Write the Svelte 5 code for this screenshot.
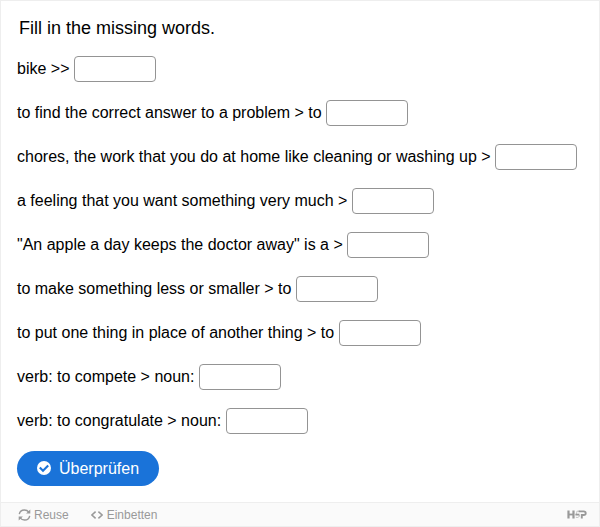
<script lang="ts">
    interface Blank {
        clue: string;
        answer: string;
    }

    let blanks: Blank[] = $state([
        { clue: 'bike >>', answer: '' },
        { clue: 'to find the correct answer to a problem > to', answer: '' },
        { clue: 'chores, the work that you do at home like cleaning or washing up >', answer: '' },
        { clue: 'a feeling that you want something very much >', answer: '' },
        { clue: '"An apple a day keeps the doctor away" is a >', answer: '' },
        { clue: 'to make something less or smaller > to', answer: '' },
        { clue: 'to put one thing in place of another thing > to', answer: '' },
        { clue: 'verb: to compete > noun:', answer: '' },
        { clue: 'verb: to congratulate > noun:', answer: '' }
    ]);
</script>

<div class="exercise">
    <main class="content">
        <p class="task">Fill in the missing words.</p>

        {#each blanks as blank}
            <label class="row">
                <span>{blank.clue}</span>
                <input type="text" autocomplete="off" spellcheck="false" bind:value={blank.answer} />
            </label>
        {/each}

        <button class="check" type="button">
            <svg width="14" height="14" viewBox="0 0 14 14">
                <circle cx="7" cy="7" r="7" fill="#fff" />
                <path d="M2.8 6.5l3.2 3.2 5.2-5.2" fill="none" stroke="#1a73d9" stroke-width="2.1" />
            </svg>
            Überprüfen
        </button>
    </main>

    <footer class="actions">
        <button class="action reuse" type="button">
            <svg width="13" height="12" viewBox="0 0 13 12" fill="none" stroke="currentColor" stroke-width="1.4">
                <path d="M1.3 5.2C1.7 2.7 3.8 1 6.4 1c1.9 0 3.4.8 4.4 2.2M11.7 6.8c-.4 2.5-2.5 4.2-5.1 4.2-1.9 0-3.4-.8-4.4-2.2" />
                <path d="M12.3.4v4.2H8.1zM.7 11.6V7.4h4.2z" fill="currentColor" stroke="none" />
            </svg>
            Reuse
        </button>
        <button class="action embed" type="button">
            <svg width="12" height="8" viewBox="0 0 12 8" fill="none" stroke="currentColor" stroke-width="1.5">
                <path d="M4.6.6L.9 4l3.7 3.4M7.4.6L11.1 4 7.4 7.4" />
            </svg>
            Einbetten
        </button>
        <svg class="logo" width="20" height="9" viewBox="0 0 20 9" fill="none" stroke="currentColor">
            <path d="M1.5 .5v8M6.5 .5v8" stroke-width="2.2" />
            <path d="M1.5 4.5h5" stroke-width="1.8" />
            <path d="M13 1.2H9.9L9.4 4.3" stroke-width=".5" />
            <path d="M8.4 4.6h4" stroke-width="1.8" />
            <path d="M12.3 5c.8 1.6-1.4 3.2-3.5 2.2" stroke-width=".6" />
            <path d="M11.6 1.4h5c2.8 0 2.8 3.6 0 3.6h-1.8v3.5" stroke-width="1.9" />
        </svg>
    </footer>
</div>

<style>
    .exercise {
        box-sizing: border-box;
        width: 600px;
        height: 527px;
        display: flex;
        flex-direction: column;
        border: 1px solid #eee;
        background: #fff;
        color: #000;
        font-family: "Liberation Sans", Arial, sans-serif;
        font-size: 16px;
    }

    .content {
        flex: 1;
        padding: 16px 16px 0;
    }

    .task {
        margin: 0 0 17px 2px;
        font-size: 18px;
        line-height: 22px;
    }

    .row {
        display: flex;
        align-items: center;
        gap: 4.45px;
        height: 26px;
        margin-bottom: 18px;
        white-space: nowrap;
    }

    .row input {
        box-sizing: border-box;
        width: 82px;
        height: 26px;
        padding: 3px 8px;
        border: 1px solid #949494;
        border-radius: 4px;
        background: #fff;
        font: inherit;
        outline: none;
    }

    .check {
        display: flex;
        align-items: center;
        gap: 8px;
        height: 35px;
        margin-top: -1px;
        padding: 0 20px;
        border: none;
        border-radius: 18px;
        background: #1a73d9;
        color: #fff;
        font: inherit;
        cursor: pointer;
    }

    .check svg {
        position: relative;
        top: -0.5px;
    }

    .actions {
        box-sizing: border-box;
        display: flex;
        align-items: center;
        height: 24px;
        padding: 0 12px 0 17px;
        border-top: 1px solid #eee;
        background: #fafafa;
        color: #999;
    }

    .action {
        display: flex;
        align-items: center;
        gap: 4px;
        padding: 0;
        border: none;
        background: none;
        color: inherit;
        font: inherit;
        font-size: 12px;
        cursor: pointer;
    }

    .reuse {
        gap: 3px;
    }

    .embed {
        margin-left: 22px;
    }

    .logo {
        margin-left: auto;
    }
</style>
